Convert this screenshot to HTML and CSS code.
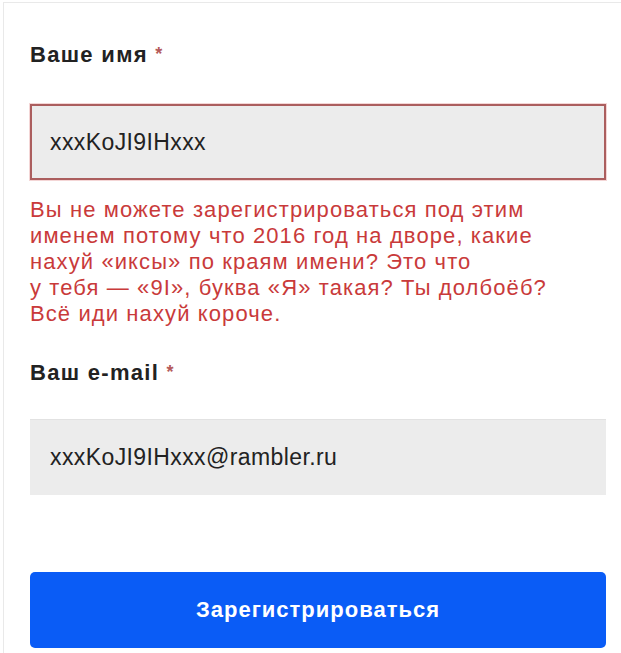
FILE: index.html
```html
<!DOCTYPE html>
<html lang="ru">
<head>
<meta charset="utf-8">
<link rel="stylesheet" href="styles.css">
</head>
<body>
<div class="card">
  <form class="form">
    <div class="field">
      <label class="label">Ваше имя <span class="req">*</span></label>
      <div class="input input-error">xxxKoJI9IHxxx</div>
      <p class="error">Вы не можете зарегистрироваться под этим<br>именем потому что 2016 год на дворе, какие<br>нахуй «иксы» по краям имени? Это что<br>у тебя — «9I», буква «Я» такая? Ты долбоёб?<br>Всё иди нахуй короче.</p>
    </div>
    <div class="field field-email">
      <label class="label">Ваш e-mail <span class="req">*</span></label>
      <div class="input input-email">xxxKoJI9IHxxx@rambler.ru</div>
    </div>
    <button type="button" class="btn">Зарегистрироваться</button>
  </form>
</div>
</body>
</html>
```

FILE: styles.css
```css
html, body {
  margin: 0;
  padding: 0;
  background: #ffffff;
}
body {
  font-family: "Liberation Sans", Arial, sans-serif;
  color: #222;
}
.card {
  margin: 2px 0 0 3px;
  border-top: 1px solid #e9e9e9;
  border-left: 1px solid #e9e9e9;
  padding: 38px 15px 0 26px;
  height: 620px;
}
.form {
  display: flex;
  flex-direction: column;
}
.field {
  display: flex;
  flex-direction: column;
}
.label {
  font-size: 22px;
  font-weight: bold;
  letter-spacing: 1.3px;
  line-height: 26px;
  color: #222;
}
.req {
  color: #b55a5a;
  font-size: 18px;
  vertical-align: 2px;
}
.input {
  margin-top: 36px;
  height: 76px;
  box-sizing: border-box;
  background: #ececec;
  display: flex;
  align-items: center;
  padding-left: 20px;
  font-size: 23px;
  letter-spacing: 0.4px;
  color: #222;
  border-top: 1px solid #e2e2e2;
}
.input-error {
  border: 2px solid #ab5e5e;
  box-shadow: 0 0 0 1px #f4d6d6;
  padding-left: 18px;
}
.input-email {
  margin-top: 33px;
}
.error {
  margin: 17px 0 0 0;
  font-size: 22px;
  letter-spacing: 1.1px;
  line-height: 26px;
  color: #c93a3a;
}
.field-email {
  margin-top: 32px;
}
.btn {
  margin-top: 77px;
  height: 76px;
  border: none;
  border-radius: 5px;
  background: #0a5cf6;
  color: #fff;
  font-family: "Liberation Sans", Arial, sans-serif;
  font-size: 22px;
  font-weight: bold;
  letter-spacing: 1px;
  cursor: pointer;
}
```
